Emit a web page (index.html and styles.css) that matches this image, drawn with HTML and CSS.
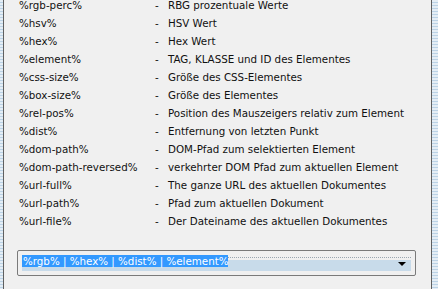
FILE: index.html
```html
<!DOCTYPE html>
<html>
<head>
<meta charset="utf-8">
<link rel="stylesheet" href="styles.css">
</head>
<body>
<div class="frame">
  <div class="stripe stripe-left"></div>
  <div class="panel">
    <div class="list">
      <div class="row"><span class="key">%rgb-perc%</span><span class="dash">-</span><span class="desc">RBG prozentuale Werte</span></div>
      <div class="row"><span class="key">%hsv%</span><span class="dash">-</span><span class="desc">HSV Wert</span></div>
      <div class="row"><span class="key">%hex%</span><span class="dash">-</span><span class="desc">Hex Wert</span></div>
      <div class="row"><span class="key">%element%</span><span class="dash">-</span><span class="desc">TAG, KLASSE und ID des Elementes</span></div>
      <div class="row"><span class="key">%css-size%</span><span class="dash">-</span><span class="desc">Größe des CSS-Elementes</span></div>
      <div class="row"><span class="key">%box-size%</span><span class="dash">-</span><span class="desc">Größe des Elementes</span></div>
      <div class="row"><span class="key">%rel-pos%</span><span class="dash">-</span><span class="desc">Position des Mauszeigers relativ zum Element</span></div>
      <div class="row"><span class="key">%dist%</span><span class="dash">-</span><span class="desc">Entfernung von letzten Punkt</span></div>
      <div class="row"><span class="key">%dom-path%</span><span class="dash">-</span><span class="desc">DOM-Pfad zum selektierten Element</span></div>
      <div class="row"><span class="key">%dom-path-reversed%</span><span class="dash">-</span><span class="desc">verkehrter DOM Pfad zum aktuellen Element</span></div>
      <div class="row"><span class="key">%url-full%</span><span class="dash">-</span><span class="desc">The ganze URL des aktuellen Dokumentes</span></div>
      <div class="row"><span class="key">%url-path%</span><span class="dash">-</span><span class="desc">Pfad zum aktuellen Dokument</span></div>
      <div class="row"><span class="key">%url-file%</span><span class="dash">-</span><span class="desc">Der Dateiname des aktuellen Dokumentes</span></div>
    </div>
    <div class="combo">
      <div class="field">
        <span class="sel">%rgb% | %hex% | %dist% | %element%</span>
        <span class="focusline"></span>
      </div>
      <span class="arrow"></span>
    </div>
  </div>
  <div class="stripe stripe-right"></div>
</div>
</body>
</html>
```

FILE: styles.css
```css
html, body {
  margin: 0;
  padding: 0;
  width: 438px;
  height: 289px;
  overflow: hidden;
  background: #f0f0f0;
}

.frame {
  display: flex;
  height: 289px;
  font-family: "DejaVu Sans", "Liberation Sans", sans-serif;
  font-size: 10.3px;
  color: #111;
}

.stripe {
  flex: none;
  background-color: #bcd3e6;
  background-image: radial-gradient(circle at 1px 1px, #e8f0f7 0.7px, transparent 0.8px);
  background-size: 2px 3px;
}

.stripe-left {
  width: 3px;
  border-right: 1px solid #5f5f5f;
}

.stripe-right {
  width: 6px;
  border-left: 1px solid #5f5f5f;
}

.panel {
  flex: 1;
  display: flex;
  flex-direction: column;
  background: #f0f0f0;
}

.list {
  margin-top: -4px;
  padding-left: 15px;
}

.row {
  display: grid;
  grid-template-columns: 136px 13px 1fr;
  height: 18px;
  line-height: 18px;
  white-space: nowrap;
}

.combo {
  position: relative;
  margin: 20px 15px 0 13px;
  height: 24px;
  border: 1px solid #7a7a7a;
  border-radius: 2px;
  background: #f0f0f0;
}

.field {
  position: relative;
  margin: 4px 4px 0 4px;
  height: 16px;
  background: linear-gradient(to bottom, transparent 0, transparent 5px, #c8dbea 5px, #c8dbea 16px);
}

.focusline {
  position: absolute;
  left: 0;
  right: 0;
  top: 2px;
  border-top: 1px dotted #9aa6b0;
}

.sel {
  position: relative;
  z-index: 1;
  display: inline-block;
  background: #3399ff;
  color: #fff;
  line-height: 12px;
  height: 12px;
  padding-left: 1px;
  white-space: nowrap;
}

.arrow {
  position: absolute;
  right: 9px;
  top: 11px;
  width: 0;
  height: 0;
  border-left: 4px solid transparent;
  border-right: 4px solid transparent;
  border-top: 4px solid #000;
}
```
